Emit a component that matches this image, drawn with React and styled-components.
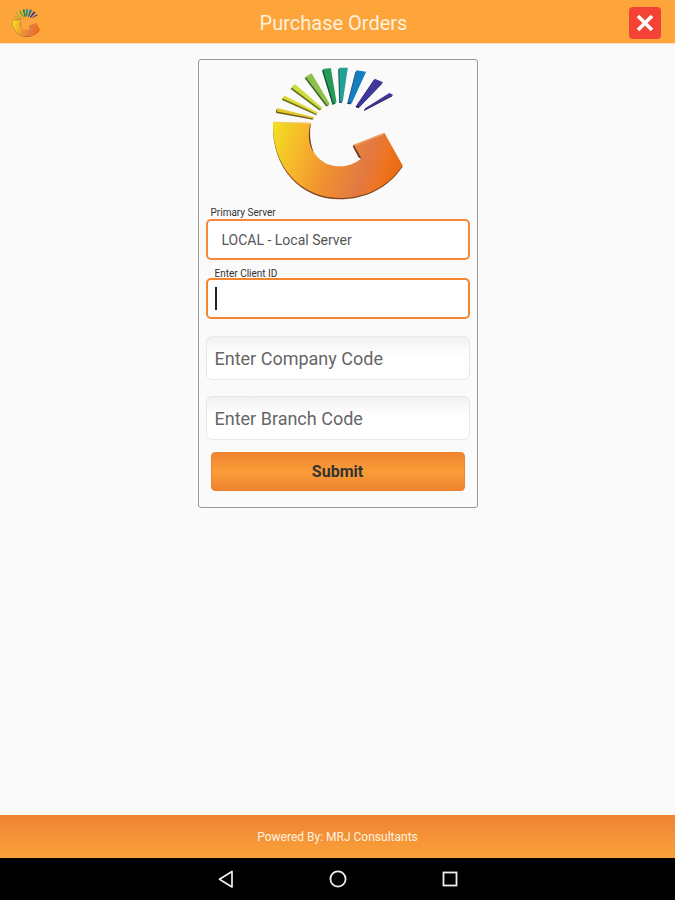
import React, { useId, useState } from "react";
import styled, { createGlobalStyle } from "styled-components";

const GlobalStyle = createGlobalStyle`
  *, *::before, *::after { box-sizing: border-box; }
  body {
    margin: 0;
    background: #fafafa;
    color: #444;
    font-family: Roboto, "Liberation Sans", sans-serif;
  }
  button, input, select { font: inherit; }
`;

const Page = styled.div`
  min-height: 100vh;
  display: flex;
  flex-direction: column;
`;

const Header = styled.header`
  display: grid;
  grid-template-columns: 1fr auto 1fr;
  align-items: center;
  height: 43px;
  padding: 2px 14px 0 12px;
  background: #fda43b;
  box-shadow: 0 1px 1px #fde3c4;
`;

const Title = styled.h1`
  margin: 0;
  padding-right: 6px;
  color: #fff2dd;
  font-size: 20px;
  font-weight: 400;
  line-height: 24px;
`;

const CloseButton = styled.button`
  justify-self: end;
  display: flex;
  align-items: center;
  justify-content: center;
  width: 32px;
  height: 32px;
  padding: 0;
  border: 0;
  border-radius: 4px;
  background: #f44336;
  cursor: pointer;
`;

const Main = styled.main`
  flex: 1;
  display: flex;
  justify-content: center;
  align-items: flex-start;
  padding: 16px;
`;

const Card = styled.form`
  display: flex;
  flex-direction: column;
  width: 100%;
  max-width: 280px;
  padding: 7px 7px 16px;
  border: 1px solid #999;
  border-radius: 3px;
`;

const LogoHolder = styled.div`
  display: flex;
  justify-content: center;
  padding-bottom: 7px;
`;

const Field = styled.div`
  position: relative;
  display: flex;
  flex-direction: column;
  margin-top: ${(p) => p.$gap || 0}px;
`;

const Label = styled.label`
  height: ${(p) => (p.$tucked ? 10 : 12)}px;
  padding-left: ${(p) => (p.$tucked ? 9 : 5)}px;
  color: #333;
  font-size: 10px;
  line-height: 12px;
`;

const ServerSelect = styled.select`
  appearance: none;
  width: 100%;
  height: 41px;
  padding: 0 14px;
  border: 2px solid #f5893a;
  border-radius: 5px;
  background: #fff;
  color: #555;
  font-size: 14px;
  outline: 0;
`;

const TextInput = styled.input`
  width: 100%;
  height: ${(p) => (p.$active ? 41 : 44)}px;
  padding: 0 8px;
  border: ${(p) => (p.$active ? "2px solid #f5852b" : "1px solid #e8e8e8")};
  border-radius: ${(p) => (p.$active ? 5 : 6)}px;
  background: ${(p) => (p.$active ? "#fff" : "linear-gradient(#f1f1f1, #fff 45%)")};
  color: #333;
  font-size: 18px;
  outline: 0;
  &::placeholder { color: #666; opacity: 1; }
`;

const Caret = styled.span`
  position: absolute;
  left: 9px;
  bottom: 9px;
  width: 2px;
  height: 23px;
  background: #222;
  pointer-events: none;
`;

const SubmitButton = styled.button`
  height: 39px;
  margin: 12px 5px 0;
  border: 1px solid #ee8430;
  border-radius: 4px;
  background: linear-gradient(#ef8430, #fa9d38 50%, #ef8430);
  color: #333;
  font-size: 16px;
  font-weight: 700;
  cursor: pointer;
`;

const Footer = styled.footer`
  display: flex;
  align-items: center;
  justify-content: center;
  height: 43px;
  background: linear-gradient(#ee8333, #fba239);
  color: #fff2e0;
  font-size: 12px;
`;

const SystemBar = styled.nav`
  display: flex;
  align-items: center;
  justify-content: center;
  gap: 88px;
  height: 42px;
  background: #000;
`;

const SystemButton = styled.button`
  display: flex;
  width: 24px;
  height: 24px;
  padding: 0;
  border: 0;
  background: none;
  cursor: pointer;
`;

const RAYS = [
  { color: "#e6c62e", edge: "#75611b", d: "M53 160 L164 188 L163 192 L52 171 Z" },
  { color: "#dedb36", edge: "#747020", d: "M74 123 L175 174 L173 178 L70 132 Z" },
  { color: "#cddd3d", edge: "#667222", d: "M106 88 L189 160 L183 164 L96 99 Z" },
  { color: "#8dc14b", edge: "#3e6524", d: "M156 56 L211 148 L203 152 L138 66 Z" },
  { color: "#249b58", edge: "#0e522b", d: "M214 40 L231 143 L222 147 L190 43 Z" },
  { color: "#24a197", edge: "#145d5b", d: "M265 39 L250 141 L242 141 L239 39 Z" },
  { color: "#147fbe", edge: "#164168", d: "M320 51 L277 145 L266 144 L291 47 Z" },
  { color: "#40379b", edge: "#211d5b", d: "M371 83 L300 157 L291 153 L346 72 Z" },
  { color: "#403795", edge: "#211d5b", d: "M402 121 L317 165 L317 161 L390 115 Z" },
];

const G_SHAPE =
  "M40 202 L154 205 C142 244 151 284 175 309 C208 343 265 345 306 312 L282 271 L375 235 L430 333 C386 397 319 431 239 431 C125 431 35 338 40 202 Z";

function Logo({ size }) {
  const fill = useId();
  return (
    <svg width={size} height={size} viewBox="34 37 400 400" role="img" aria-label="Company logo">
      <defs>
        <linearGradient id={fill} gradientUnits="userSpaceOnUse" x1="45" y1="215" x2="425" y2="335">
          <stop offset="0" stopColor="#f0de20" />
          <stop offset="0.28" stopColor="#f7af2d" />
          <stop offset="0.5" stopColor="#ee8e31" />
          <stop offset="0.74" stopColor="#e27a42" />
          <stop offset="0.88" stopColor="#ee7420" />
          <stop offset="1" stopColor="#ea6a12" />
        </linearGradient>
      </defs>
      <path d={G_SHAPE} fill="#81451c" transform="translate(0 4)" />
      <path d={G_SHAPE} fill={`url(#${fill})`} />
      <path d="M43 204 L152 207 M284 273 L374 238" fill="none" stroke="#f8c38d" strokeWidth="4" strokeOpacity="0.5" />
      <path d="M154 206 C142 240 149 276 162 293 C151 264 149 235 154 206 Z M282 271 L306 312 L298 310 L280 276 Z" fill="#6f3b21" />
      {RAYS.map((ray) => (
        <g key={ray.d}>
          <path d={ray.d} fill={ray.edge} transform="translate(-3 4)" />
          <path d={ray.d} fill={ray.color} />
        </g>
      ))}
    </svg>
  );
}

export default function App() {
  const [client, setClient] = useState("");
  return (
    <>
      <GlobalStyle />
      <Page>
        <Header>
          <Logo size={28} />
          <Title>Purchase Orders</Title>
          <CloseButton type="button" aria-label="Close">
            <svg width="20" height="20" viewBox="0 0 20 20" aria-hidden="true">
              <path d="M3 3 L17 17 M17 3 L3 17" stroke="#fff" strokeWidth="3.6" />
            </svg>
          </CloseButton>
        </Header>
        <Main>
          <Card onSubmit={(e) => e.preventDefault()}>
            <LogoHolder>
              <Logo size={133} />
            </LogoHolder>
            <Field>
              <Label htmlFor="server">Primary Server</Label>
              <ServerSelect id="server">
                <option>LOCAL - Local Server</option>
              </ServerSelect>
            </Field>
            <Field $gap={8}>
              <Label htmlFor="client" $tucked>Enter Client ID</Label>
              <TextInput id="client" $active value={client} onChange={(e) => setClient(e.target.value)} />
              {client === "" && <Caret />}
            </Field>
            <Field $gap={17}>
              <TextInput aria-label="Enter Company Code" placeholder="Enter Company Code" />
            </Field>
            <Field $gap={16}>
              <TextInput aria-label="Enter Branch Code" placeholder="Enter Branch Code" />
            </Field>
            <SubmitButton type="submit">Submit</SubmitButton>
          </Card>
        </Main>
        <Footer>Powered By: MRJ Consultants</Footer>
        <SystemBar aria-label="System navigation">
          <SystemButton type="button" aria-label="Back">
            <svg width="24" height="24" viewBox="0 0 24 24" fill="none" stroke="#eee" strokeWidth="1.7" aria-hidden="true">
              <path d="M18 4.5 V20 L5.500 12.200 Z" strokeLinejoin="round" />
            </svg>
          </SystemButton>
          <SystemButton type="button" aria-label="Home">
            <svg width="24" height="24" viewBox="0 0 24 24" fill="none" stroke="#eee" strokeWidth="1.8" aria-hidden="true">
              <circle cx="12" cy="12" r="7.600" />
            </svg>
          </SystemButton>
          <SystemButton type="button" aria-label="Recent apps">
            <svg width="24" height="24" viewBox="0 0 24 24" fill="none" stroke="#eee" strokeWidth="1.8" aria-hidden="true">
              <rect x="5.500" y="5.500" width="13" height="13" />
            </svg>
          </SystemButton>
        </SystemBar>
      </Page>
    </>
  );
}
